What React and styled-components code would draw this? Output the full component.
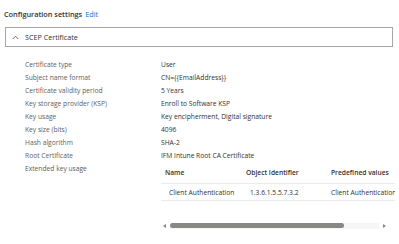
import React from "react";
import styled, { createGlobalStyle } from "styled-components";

const Global = createGlobalStyle`
  html, body { margin: 0; padding: 0; background: #fff; }
  body { font-family: "Open Sans", "Noto Sans", sans-serif; color: #323130; }
`;

const Page = styled.div`
  width: 399px;
  height: 244px;
  overflow: hidden;
  padding: 8px 6px 0 4px;
  box-sizing: border-box;
`;

const Header = styled.div`
  display: flex;
  align-items: baseline;
  gap: 3px;
  font-size: 7.3px;
  font-weight: 600;
  color: #323130;
  height: 13px;
  line-height: 13px;
`;

const EditLink = styled.span`
  color: #0078d4;
  font-weight: 400;
`;

const Section = styled.div`
  margin-top: 6px;
  margin-left: 1px;
  border: 1px solid #a8a6a4;
  height: 18px;
  display: flex;
  align-items: center;
  padding-left: 6px;
  gap: 6px;
  font-size: 7.2px;
  color: #323130;
`;

const Rows = styled.div`
  display: grid;
  grid-template-columns: 136px 1fr;
  padding-left: 21px;
  margin-top: 10.5px;
  font-size: 6.7px;
`;

const Label = styled.div`
  color: #605e5c;
  height: 13px;
  line-height: 13px;
  white-space: nowrap;
`;

const Value = styled.div`
  color: #323130;
  height: 13px;
  line-height: 13px;
  white-space: nowrap;
  min-width: 0;
`;

const TableWrap = styled.div`
  overflow: hidden;
  width: 234px;
  margin-top: 1.5px;
`;

const Table = styled.div`
  display: grid;
  grid-template-columns: 82px 85px 100px;
  width: 267px;
  font-size: 6.7px;
  color: #323130;
`;

const Th = styled.div`
  font-weight: 600;
  height: 20px;
  line-height: 20px;
  padding-left: ${(p) => p.$pad}px;
  border-bottom: 1px solid #edebe9;
  white-space: nowrap;
`;

const Td = styled.div`
  height: 16px;
  line-height: 17px;
  padding-left: ${(p) => p.$pad}px;
  border-bottom: 1px solid #edebe9;
  white-space: nowrap;
`;

const Scroll = styled.div`
  display: flex;
  align-items: center;
  margin-top: 21.5px;
  margin-left: 2px;
  width: 223px;
  height: 6px;
  gap: 4px;
`;

const Arrow = styled.div`
  width: 0;
  height: 0;
  border-top: 2.5px solid transparent;
  border-bottom: 2.5px solid transparent;
  ${(p) => (p.$left ? "border-right: 3px solid #8a8886;" : "border-left: 3px solid #8a8886;")}
`;

const Track = styled.div`
  flex: 1;
  height: 6px;
  background: #f6f6f6;
  display: flex;
  align-items: center;
`;

const Thumb = styled.div`
  width: 174px;
  height: 5px;
  border-radius: 3px;
  background: #8a8886;
`;

const rows = [
  ["Certificate type", "User"],
  ["Subject name format", "CN={{EmailAddress}}"],
  ["Certificate validity period", "5 Years"],
  ["Key storage provider (KSP)", "Enroll to Software KSP"],
  ["Key usage", "Key encipherment, Digital signature"],
  ["Key size (bits)", "4096"],
  ["Hash algorithm", "SHA-2"],
  ["Root Certificate", "IFM Intune Root CA Certificate"],
];

export default function App() {
  return (
    <Page>
      <Global />
      <Header>
        Configuration settings <EditLink>Edit</EditLink>
      </Header>
      <Section>
        <svg width="7" height="5" viewBox="0 0 7 5">
          <path d="M0.8 4 L3.5 1.2 L6.2 4" fill="none" stroke="#605e5c" strokeWidth="0.9" />
        </svg>
        SCEP Certificate
      </Section>
      <Rows>
        {rows.map(([l, v]) => (
          <React.Fragment key={l}>
            <Label>{l}</Label>
            <Value>{v}</Value>
          </React.Fragment>
        ))}
        <Label>Extended key usage</Label>
        <div>
          <TableWrap>
            <Table>
              <Th $pad={4}>Name</Th>
              <Th $pad={3}>Object Identifier</Th>
              <Th $pad={3}>Predefined values</Th>
              <Td $pad={8}>Client Authentication</Td>
              <Td $pad={7}>1.3.6.1.5.5.7.3.2</Td>
              <Td $pad={3}>Client Authentication</Td>
            </Table>
          </TableWrap>
          <Scroll>
            <Arrow $left />
            <Track>
              <Thumb />
            </Track>
            <Arrow />
          </Scroll>
        </div>
      </Rows>
    </Page>
  );
}
